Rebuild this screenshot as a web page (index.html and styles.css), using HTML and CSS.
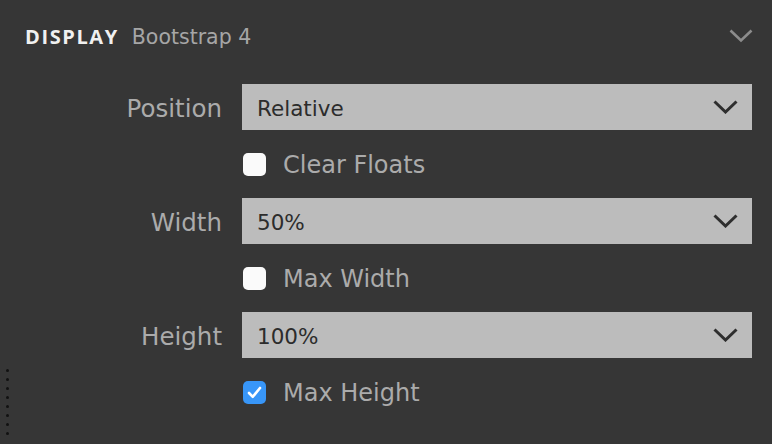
FILE: index.html
```html
<!DOCTYPE html>
<html>
<head>
<meta charset="utf-8">
<link rel="stylesheet" href="styles.css">
</head>
<body>
<div class="panel">
  <div class="header">
    <div class="title"><span class="name">DISPLAY</span><span class="sub">Bootstrap 4</span></div>
    <svg class="collapse" width="24" height="14" viewBox="0 0 24 14"><path d="M1.5 1.5 L12 11.5 L22.5 1.5" fill="none" stroke="#8c8c8c" stroke-width="2.6"/></svg>
  </div>
  <div class="form">
    <div class="label">Position</div>
    <div class="select"><span>Relative</span><svg width="25" height="14" viewBox="0 0 25 14"><path d="M1.5 1.5 L12.5 12 L23.5 1.5" fill="none" stroke="#2e2e2e" stroke-width="3"/></svg></div>
    <div></div>
    <div class="check"><span class="box"></span><span class="clabel">Clear Floats</span></div>

    <div class="label">Width</div>
    <div class="select"><span>50%</span><svg width="25" height="14" viewBox="0 0 25 14"><path d="M1.5 1.5 L12.5 12 L23.5 1.5" fill="none" stroke="#2e2e2e" stroke-width="3"/></svg></div>
    <div></div>
    <div class="check"><span class="box"></span><span class="clabel">Max Width</span></div>

    <div class="label">Height</div>
    <div class="select"><span>100%</span><svg width="25" height="14" viewBox="0 0 25 14"><path d="M1.5 1.5 L12.5 12 L23.5 1.5" fill="none" stroke="#2e2e2e" stroke-width="3"/></svg></div>
    <div></div>
    <div class="check"><span class="box checked"><svg width="15" height="13" viewBox="0 0 15 13"><path d="M2 7 L5.8 10.8 L13 2" fill="none" stroke="#fff" stroke-width="2.6" stroke-linecap="round" stroke-linejoin="round"/></svg></span><span class="clabel">Max Height</span></div>
  </div>
  <div class="grip"><i></i><i></i><i></i><i></i><i></i><i></i><i></i><i></i></div>
</div>
</body>
</html>
```
FILE: styles.css
```css
html, body {
  margin: 0;
  padding: 0;
  background: #363636;
}
.panel {
  position: relative;
  width: 772px;
  height: 444px;
  overflow: hidden;
  font-family: "DejaVu Sans", sans-serif;
}
.header {
  height: 84px;
  display: flex;
  justify-content: space-between;
  align-items: flex-start;
  padding: 0 20px 0 25px;
  box-sizing: border-box;
}
.title {
  padding-top: 23px;
  display: flex;
  align-items: baseline;
}
.name {
  font-family: "Open Sans", sans-serif;
  font-weight: 700;
  font-size: 20px;
  letter-spacing: 1.6px;
  color: #f0f0f0;
}
.sub {
  margin-left: 13px;
  font-size: 20.5px;
  color: #a6a6a6;
}
.collapse {
  margin-top: 29px;
  margin-right: -1px;
}
.form {
  display: grid;
  grid-template-columns: 222px 1fr;
  column-gap: 20px;
  padding-right: 20px;
  grid-auto-rows: 46px 68px;
}
.label {
  text-align: right;
  align-self: center;
  font-size: 24.5px;
  color: #ababab;
  padding-top: 2px;
}
.select {
  background: #bcbcbc;
  display: flex;
  align-items: center;
  justify-content: space-between;
  padding: 0 14px 0 15px;
  font-size: 21.5px;
  color: #2c2c2c;
}
.select span { padding-top: 3px; }
.check {
  display: flex;
  align-items: center;
}
.box {
  width: 23px;
  height: 23px;
  border-radius: 5px;
  background: #fafafa;
  margin-left: 1px;
  display: flex;
  align-items: center;
  justify-content: center;
}
.box.checked { background: #3896f8; }
.clabel {
  margin-left: 17px;
  font-size: 24px;
  color: #ababab;
  padding-top: 1px;
}
.grip {
  position: absolute;
  left: 6px;
  top: 369px;
  display: flex;
  flex-direction: column;
  gap: 6px;
}
.grip i {
  display: block;
  width: 3px;
  height: 3px;
  border-radius: 50%;
  background: #111;
}
```
